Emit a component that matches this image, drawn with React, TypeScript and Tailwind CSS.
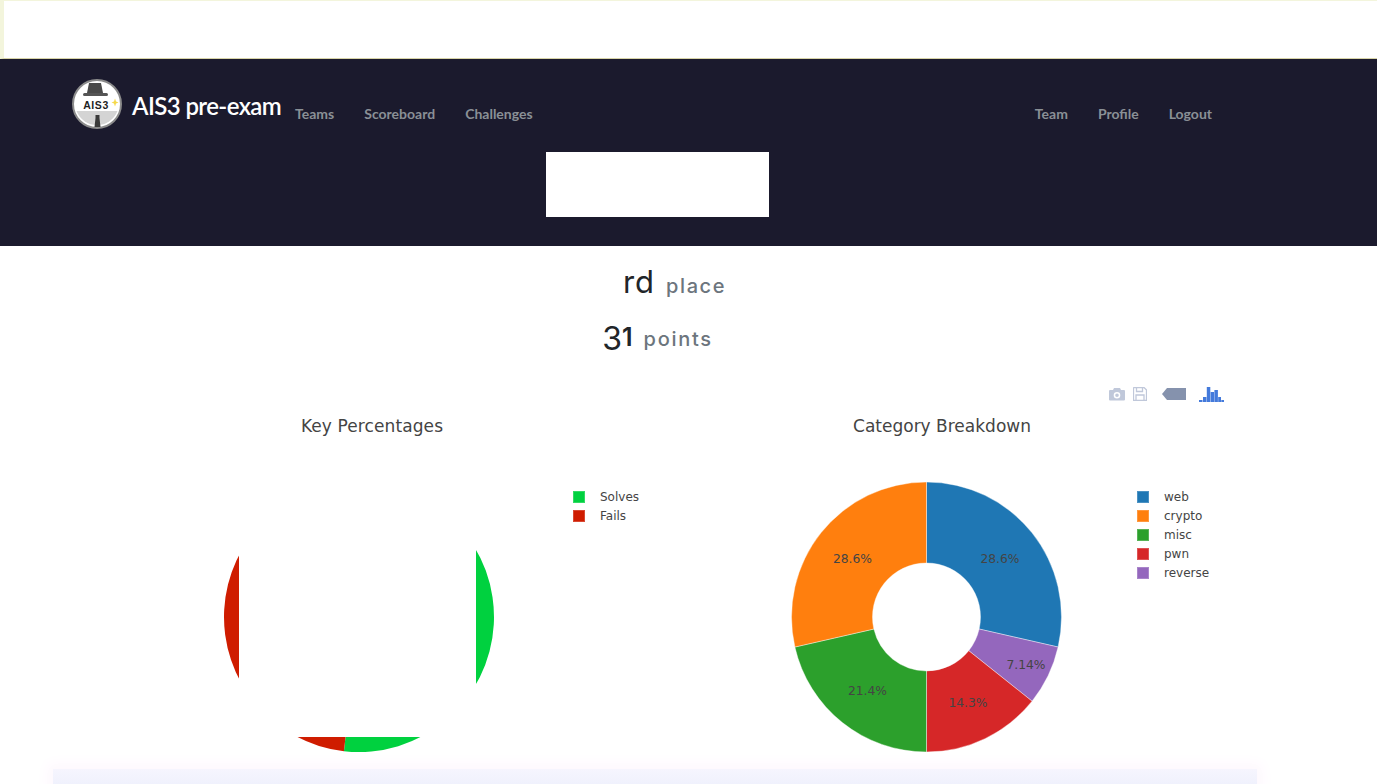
import React from "react";

const polar = (cx: number, cy: number, r: number, deg: number) => {
  const a = (deg * Math.PI) / 180;
  return [cx + r * Math.sin(a), cy - r * Math.cos(a)];
};

const wedge = (cx: number, cy: number, r: number, hole: number, from: number, to: number) => {
  const large = to - from > 180 ? 1 : 0;
  const [x1, y1] = polar(cx, cy, r, from);
  const [x2, y2] = polar(cx, cy, r, to);
  if (!hole) return `M${cx} ${cy}L${x1} ${y1}A${r} ${r} 0 ${large} 1 ${x2} ${y2}Z`;
  const [x3, y3] = polar(cx, cy, hole, to);
  const [x4, y4] = polar(cx, cy, hole, from);
  return `M${x1} ${y1}A${r} ${r} 0 ${large} 1 ${x2} ${y2}L${x3} ${y3}A${hole} ${hole} 0 ${large} 0 ${x4} ${y4}Z`;
};

const categories = [
  { name: "web", color: "#1f77b4", share: 4 / 14, label: "28.6%", x: 343, y: 92.5 },
  { name: "reverse", color: "#9467bd", share: 1 / 14, label: "7.14%", x: 369, y: 198.5 },
  { name: "pwn", color: "#d62728", share: 2 / 14, label: "14.3%", x: 311, y: 236.5 },
  { name: "misc", color: "#2ca02c", share: 3 / 14, label: "21.4%", x: 210.5, y: 224.5 },
  { name: "crypto", color: "#ff7f0e", share: 4 / 14, label: "28.6%", x: 195.5, y: 92.5 },
];

const legendOrder = ["web", "crypto", "misc", "pwn", "reverse"];

const Legend = ({ items }: { items: { name: string; color: string }[] }) => (
  <div className="flex flex-col gap-[7px] pt-[25px] text-[12px] leading-[12px] text-[#444444]">
    {items.map((item) => (
      <div key={item.name} className="flex items-center gap-[15px]">
        <span className="h-3 w-3 border border-white/20" style={{ backgroundColor: item.color }} />
        <span>{item.name}</span>
      </div>
    ))}
  </div>
);

const KeyPercentages = () => (
  <div className="w-[570px]">
    <h3 className="h-[25px] text-center text-[17px] leading-[25px] tracking-[0.1px] text-[#444444]">Key Percentages</h3>
    <div className="mt-[27px] flex">
      <svg width="486" height="296" viewBox="0 0 486 296" className="shrink-0">
        <path d={wedge(272, 151, 135, 0, 0, 186.4)} fill="#00d13f" />
        <path d={wedge(272, 151, 135, 0, 186.4, 360)} fill="#cf1c00" />
        <rect x="152" y="0" width="237" height="271" fill="#ffffff" />
      </svg>
      <Legend
        items={[
          { name: "Solves", color: "#00d13f" },
          { name: "Fails", color: "#cf1c00" },
        ]}
      />
    </div>
  </div>
);

const CategoryBreakdown = () => {
  let angle = 0;
  const slices = categories.map((c) => {
    const from = angle;
    angle += c.share * 360;
    return { ...c, from, to: angle };
  });
  return (
    <div className="w-[570px]">
      <h3 className="h-[25px] text-center text-[17px] leading-[25px] text-[#444444]">Category Breakdown</h3>
      <div className="mt-[27px] flex">
        <svg width="480" height="296" viewBox="0 0 480 296" className="shrink-0">
          {slices.map((s) => (
            <path key={s.name} d={wedge(269.5, 151, 135, 54, s.from, s.to)} fill={s.color} stroke="#ffffff" strokeWidth="0.4" />
          ))}
          {slices.map((s) => (
            <text key={s.name} x={s.x} y={s.y} textAnchor="middle" dominantBaseline="central" fontSize="12.3" fill="#444444">
              {s.label}
            </text>
          ))}
        </svg>
        <Legend items={legendOrder.map((n) => categories.find((c) => c.name === n)!)} />
      </div>
    </div>
  );
};

const Logo = () => (
  <svg width="50" height="50" viewBox="0 0 50 50" className="shrink-0">
    <circle cx="25" cy="25" r="24" fill="#ffffff" stroke="#8b8b8b" strokeWidth="2" />
    <path d="M4.500 32h41a22 22 0 0 1-41 0Z" fill="#d4d4d4" />
    <path d="M17 4h12l2 10H15Z" fill="#4a4a4a" />
    <rect x="11" y="14" width="25" height="3" rx="1.500" fill="#555555" />
    <text x="24" y="29.500" textAnchor="middle" fontSize="10.500" fontWeight="900" letterSpacing="0.6" fill="#1f1f1f" fontFamily="'Liberation Sans', sans-serif">
      AIS3
    </text>
    <path d="M43 19.500l1 3 2.500 1-2.500 1-1 3-1-3-2.500-1 2.500-1Z" fill="#f5d94a" />
    <path d="M23.500 36h4v3l1 9h-6l1-9Z" fill="#3a3a3a" />
  </svg>
);

const Modebar = () => (
  <div className="flex h-[20px] items-center justify-end pr-[153px]">
    <svg width="16" height="14" viewBox="0 0 16 14" fill="#c0c8da">
      <path fillRule="evenodd" d="M5 1h6l1 2h3a1 1 0 0 1 1 1v8.500a1 1 0 0 1-1 1H1a1 1 0 0 1-1-1V4a1 1 0 0 1 1-1h3ZM8 5a3.300 3.300 0 1 0 0 6.600A3.300 3.300 0 0 0 8 5Zm0 1.500a1.800 1.800 0 1 1 0 3.600 1.800 1.800 0 0 1 0-3.600Z" />
    </svg>
    <svg width="14" height="14" viewBox="0 0 14 14" fill="none" stroke="#c0c8da" strokeWidth="1.300" className="ml-[8px]">
      <path d="M1 .500h10l2.500 2.500v10.500H.500V1Z" />
      <path d="M3.500 .500v4h6v-4M3 13.500V8h8v5.500" />
    </svg>
    <svg width="24" height="12" viewBox="0 0 24 12" fill="#8592ad" className="ml-[15px]">
      <path d="M0 6l5-6h19v12H5Z" />
    </svg>
    <svg width="25" height="16" viewBox="0 0 25 16" fill="#447adb" className="ml-[13px]">
      <rect x="0" y="14" width="3.500" height="2" />
      <rect x="4" y="11" width="3.500" height="5" />
      <rect x="7.800" y="1" width="3.500" height="15" />
      <rect x="11.600" y="6" width="3.500" height="10" />
      <rect x="15.400" y="4" width="3.500" height="12" />
      <rect x="19.200" y="11" width="2.800" height="5" />
      <rect x="22.300" y="14" width="2.700" height="2" />
    </svg>
  </div>
);

export default function App() {
  return (
    <div className="h-[784px] overflow-hidden bg-white font-['DejaVu_Sans',sans-serif]">
      <div className="h-[59px] border-t border-b border-l-4 border-t-[#f3f5dc] border-b-[#d8d4a8] border-l-[#f3f5dc] bg-white" />
      <nav className="h-[187px] bg-[#1b1a2d] font-['Lato',sans-serif]">
        <div className="flex h-[93px] pl-[72px] pr-[165px] pt-[20px]">
          <Logo />
          <span className="ml-[10px] mt-[13px] text-[24px] leading-[28px] font-semibold tracking-[-0.6px] text-white">AIS3 pre-exam</span>
          <div className="ml-[14px] mt-[26px] flex gap-[30px] text-[14px] leading-[17px] font-bold text-[#8a9096]">
            <a>Teams</a>
            <a>Scoreboard</a>
            <a>Challenges</a>
          </div>
          <div className="ml-auto mt-[26px] flex gap-[30px] text-[14px] leading-[17px] font-bold text-[#8a9096]">
            <a>Team</a>
            <a>Profile</a>
            <a>Logout</a>
          </div>
        </div>
        <div className="ml-[546px] h-[65px] w-[223px] bg-white" />
      </nav>
      <main>
        <div className="flex w-[1315px] flex-col items-center pt-[16px] font-['Inter',sans-serif]">
          <div className="flex h-[40px] items-baseline gap-[11px] pl-[34px]">
            <span className="text-[31px] leading-[40px] tracking-[1px] text-[#212529]">rd</span>
            <span className="text-[20px] font-medium tracking-[1.600px] text-[#6c757d]">place</span>
          </div>
          <div className="mt-[13px] flex h-[40px] items-baseline gap-[11px]">
            <span className="text-[32px] leading-[40px] text-[#212529]">
              <span className="inline-block translate-y-[4px]">3</span>
              <span className="text-[25px] font-semibold">1</span>
            </span>
            <span className="text-[20px] font-medium tracking-[1.700px] text-[#6c757d]">points</span>
          </div>
        </div>
        <div className="mt-[29px]">
          <Modebar />
        </div>
        <div className="mt-[10px] flex pl-[87px]">
          <KeyPercentages />
          <CategoryBreakdown />
        </div>
        <div className="mt-[7px] ml-[53px] h-[20px] w-[1204px] bg-gradient-to-b from-[#f6f5fe] to-[#eef0fc] shadow-[0_0_14px_6px_#fef8fe]" />
      </main>
    </div>
  );
}
